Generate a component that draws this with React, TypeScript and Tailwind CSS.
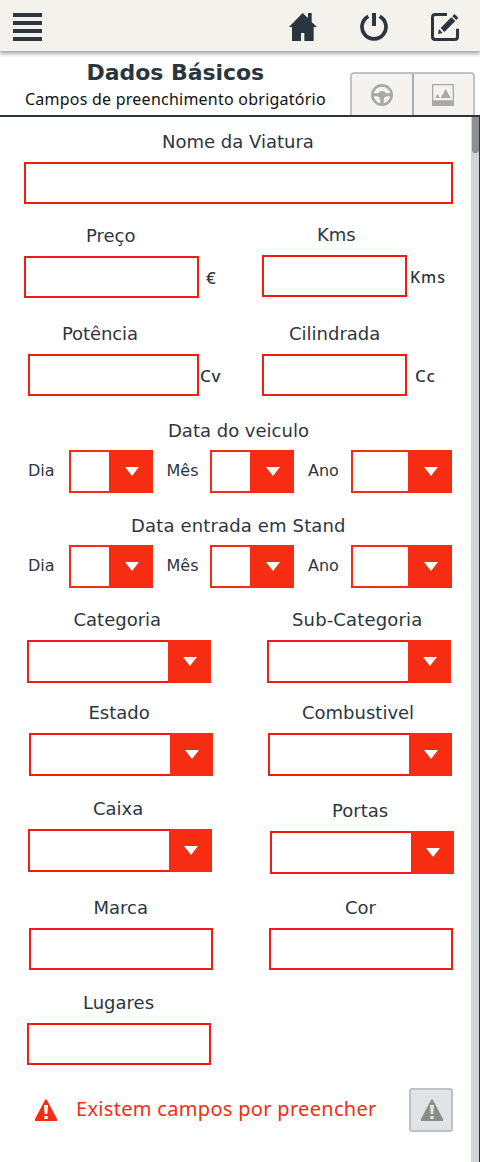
import React from "react";

const VERDANA = "font-['DejaVu_Sans',sans-serif]";
const HUMANIST = "font-['Noto_Sans',sans-serif]";

function Label({ className, children }: { className: string; children: string }) {
  return (
    <div className={`h-6 w-max pl-px whitespace-nowrap text-[18px] leading-6 text-[#2d363e] ${className}`}>{children}</div>
  );
}

function Arrow() {
  return (
    <svg width="14" height="9" viewBox="0 0 14 9" className="block">
      <path d="M0 0H14L7 9Z" fill="#fff" />
    </svg>
  );
}

function TextBox({ className }: { className: string }) {
  return <div className={`mt-2 h-[42px] shrink-0 border-2 border-[#f61a14] bg-white ${className}`} />;
}

function SelectBox({ className }: { className: string }) {
  return (
    <div className={`mt-2 flex h-[43px] w-[184px] ${className}`}>
      <div className="w-[141px] border-2 border-r-0 border-[#f61a14] bg-white" />
      <div className="w-[43px] bg-[#f62c13] pt-[17px] pl-[15px]">
        <Arrow />
      </div>
    </div>
  );
}

function DatePart({ text, labelClass, boxClass }: { text: string; labelClass: string; boxClass: string }) {
  return (
    <>
      <span className={`shrink-0 pt-[11px] text-[16px] leading-5 whitespace-nowrap text-[#2d363e] ${labelClass}`}>{text}</span>
      <div className={`flex h-[43px] shrink-0 ${boxClass}`}>
        <div className="flex-1 border-2 border-r-0 border-[#f52b13] bg-white" />
        <div className="w-11 bg-[#f62c13] pt-[17px] pl-4">
          <Arrow />
        </div>
      </div>
    </>
  );
}

function DateRow() {
  return (
    <div className="mt-[7px] flex pl-[28px]">
      <DatePart text="Dia" labelClass="w-[41px]" boxClass="w-[84px]" />
      <DatePart text="Mês" labelClass="ml-[13px] w-[44px] pl-[0.5px]" boxClass="w-[84px]" />
      <DatePart text="Ano" labelClass="ml-[14px] w-[43px]" boxClass="w-[101px]" />
    </div>
  );
}

function Unit({ className, children }: { className: string; children: string }) {
  return (
    <span className={`pt-[20px] leading-5 font-medium whitespace-nowrap text-[#2d363e] ${HUMANIST} ${className}`}>
      {children}
    </span>
  );
}

function Warning({ fill, mark }: { fill: string; mark: string }) {
  return (
    <svg width="22" height="22" viewBox="0 0 66 66" className="block shrink-0">
      <path d="M33 0L36 3L66 60V66H0V60L30 3Z" fill={fill} />
      <path d="M27 18H39L37 45H29ZM28 51H38V60H28Z" fill={mark} />
    </svg>
  );
}

function Header() {
  return (
    <header className="relative z-10 flex h-[51px] shrink-0 items-start bg-[#f4f2ec] pt-[13px] pl-[13px] shadow-[0_1px_5px_1px_rgba(0,0,0,0.45)]">
      <div className="flex w-[29px] flex-col gap-1">
        <div className="h-1 bg-[#2b353d]" />
        <div className="h-1 bg-[#2b353d]" />
        <div className="h-1 bg-[#2b353d]" />
        <div className="h-1 bg-[#2b353d]" />
      </div>
      <svg width="28" height="28" viewBox="0 0 84 84" className="ml-[247px] block">
        <path d="M41 0L57 15V0H68V27L84 42H74V84H46V60H36V84H9V42H0Z" fill="#2b353d" />
      </svg>
      <svg width="28" height="28" viewBox="0 0 84 84" className="ml-[43px] block">
        <path d="M25 10A36 36 0 1 0 59 10" fill="none" stroke="#2b353d" strokeWidth="11" />
        <path d="M36 0H48V39H36Z" fill="#2b353d" />
      </svg>
      <svg width="28" height="28" viewBox="0 0 84 84" className="ml-[43px] block">
        <path d="M48 4.500H13Q4.500 4.500 4.500 13V71Q4.500 79.500 13 79.500H71Q79.500 79.500 79.500 71V47" fill="none" stroke="#2b353d" strokeWidth="9" />
        <path d="M21 63L24 48L35 60ZM29 45L61 13L73 24L40 57ZM64 10L70 3L82 14L76 21Z" fill="#2b353d" />
      </svg>
    </header>
  );
}

function TitleBar() {
  return (
    <div className="flex h-[66px] shrink-0 border-b-2 border-[#2b353d]">
      <div className="w-[350px]">
        <h1 className="mt-[8px] pl-[86.5px] text-[22px] leading-7 font-bold tracking-[-0.05px] whitespace-nowrap text-[#2b353d]">Dados Básicos</h1>
        <p className={`mt-[2px] pl-[25px] text-[16px] leading-5 tracking-[0.235px] whitespace-nowrap text-[#111] ${HUMANIST}`}>
          Campos de preenchimento obrigatório
        </p>
      </div>
      <div className="mt-[21px] flex h-[43px] w-[125px] rounded-t-[4px] border-2 border-b-0 border-[#c1c3c6] bg-[#f5f3ef]">
        <div className="w-[62px] border-r-2 border-[#a9acb0] pt-[10px] pl-[19px]">
          <svg width="22" height="22" viewBox="0 0 66 66" className="block">
            <circle cx="33" cy="33" r="29" fill="none" stroke="#a9a9a8" strokeWidth="8" />
            <path d="M6 28H21Q25 21 33 21Q41 21 45 28H60V37H46Q38 41 38 48V60H28V48Q28 41 20 37H6Z" fill="#a9a9a8" />
          </svg>
        </div>
        <div className="pt-[10px] pl-[18px]">
          <svg width="22" height="22" viewBox="0 0 66 66" className="block">
            <path fillRule="evenodd" d="M0 0H66V66H0ZM4 4V49H62V4Z" fill="#a9a9a8" />
            <path d="M10 42L17 29L24 42ZM26 42L41 15L56 42Z" fill="#a9a9a8" />
          </svg>
        </div>
      </div>
    </div>
  );
}

function SelectField({ label, labelClass, boxClass, className = "" }: { label: string; labelClass: string; boxClass: string; className?: string }) {
  return (
    <div className={`w-[240px] shrink-0 ${className}`}>
      <Label className={labelClass}>{label}</Label>
      <SelectBox className={boxClass} />
    </div>
  );
}

function TextField({ label, labelClass, boxClass, unit, unitClass = "", className = "" }: { label: string; labelClass: string; boxClass: string; unit?: string; unitClass?: string; className?: string }) {
  return (
    <div className={`w-[240px] shrink-0 ${className}`}>
      <Label className={labelClass}>{label}</Label>
      <div className="flex">
        <TextBox className={boxClass} />
        {unit && <Unit className={unitClass}>{unit}</Unit>}
      </div>
    </div>
  );
}

function Form() {
  return (
    <div className="w-[471px] shrink-0 overflow-hidden">
      <div className="mt-[13px]">
        <Label className="ml-[161px]">Nome da Viatura</Label>
        <TextBox className="ml-[24px] w-[429px]" />
      </div>
      <div className="mt-[19px] flex">
        <TextField className="pt-px" label="Preço" labelClass="ml-[85px]" boxClass="ml-[24px] w-[175px]" unit="€" unitClass="ml-[7px] text-[17px]" />
        <TextField label="Kms" labelClass="ml-[76px]" boxClass="ml-[22px] w-[145px]" unit="Kms" unitClass="ml-[3px] text-[16px] tracking-[1px]" />
      </div>
      <div className="mt-[24px] flex">
        <TextField label="Potência" labelClass="ml-[61px] tracking-[-0.1px]" boxClass="ml-[28px] w-[171px]" unit="Cv" unitClass="ml-[1px] text-[17px] tracking-[0.8px]" />
        <TextField label="Cilindrada" labelClass="ml-[48px]" boxClass="ml-[22px] w-[145px]" unit="Cc" unitClass="ml-[8px] text-[17px] tracking-[0.8px]" />
      </div>
      <div className="mt-[23px]">
        <Label className="ml-[167px]">Data do veiculo</Label>
        <DateRow />
      </div>
      <div className="mt-[21px]">
        <Label className="ml-[130px] tracking-[0.15px]">Data entrada em Stand</Label>
        <DateRow />
      </div>
      <div className="mt-[20px] flex">
        <SelectField label="Categoria" labelClass="ml-[72.5px]" boxClass="ml-[27px]" />
        <SelectField label="Sub-Categoria" labelClass="ml-[51px] tracking-[0.15px]" boxClass="ml-[27px]" />
      </div>
      <div className="mt-[18px] flex">
        <SelectField label="Estado" labelClass="ml-[87.5px]" boxClass="ml-[29px]" />
        <SelectField label="Combustivel" labelClass="ml-[61px]" boxClass="ml-[28px]" />
      </div>
      <div className="mt-[21px] flex">
        <SelectField label="Caixa" labelClass="ml-[92px]" boxClass="ml-[28px]" />
        <SelectField className="pt-[2px]" label="Portas" labelClass="ml-[91px]" boxClass="ml-[30px]" />
      </div>
      <div className="mt-[22px] flex">
        <TextField label="Marca" labelClass="ml-[92.5px]" boxClass="ml-[29px] w-[184px]" />
        <TextField label="Cor" labelClass="ml-[104px]" boxClass="ml-[29px] w-[184px]" />
      </div>
      <div className="mt-[21px] flex">
        <TextField label="Lugares" labelClass="ml-[82px]" boxClass="ml-[27px] w-[184px]" />
      </div>
      <div className="mt-[23px] flex h-11 items-center pl-[35px]">
        <Warning fill="#f62c13" mark="#fff" />
        <span className={`ml-[18px] w-[334px] pb-[2px] pl-px text-[20px] leading-7 tracking-[0.31px] whitespace-nowrap text-[#f62c13] ${HUMANIST}`}>
          Existem campos por preencher
        </span>
        <div className="flex h-11 w-11 shrink-0 items-center justify-center rounded-[3px] border-2 border-[#bfc1c6] bg-[#e2e3e5] pl-px">
          <Warning fill="#8b8d8b" mark="#e2e3e5" />
        </div>
      </div>
    </div>
  );
}

export default function App() {
  return (
    <div className={`flex h-[1162px] w-[480px] flex-col overflow-hidden bg-white ${VERDANA}`}>
      <Header />
      <TitleBar />
      <div className="flex min-h-0 flex-1">
        <Form />
        <div className="w-[9px] border-r border-[#2b353d] bg-[#d0d4d7]">
          <div className="ml-px h-[36px] rounded-b-[3px] bg-[#8d8e90]" />
        </div>
      </div>
    </div>
  );
}
